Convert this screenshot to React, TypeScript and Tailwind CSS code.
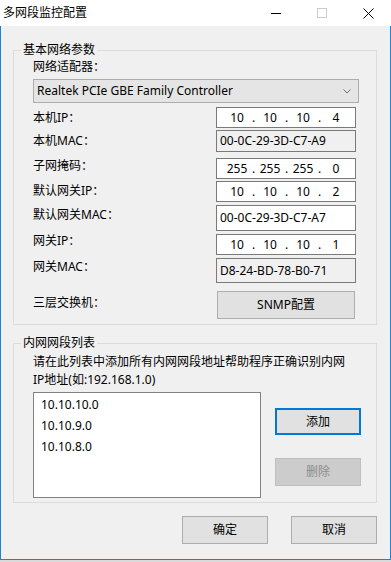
import React from "react";

const FONT = { fontFamily: '"Noto Sans", "Noto Sans CJK SC", sans-serif' };

function IpBox({ parts }: { parts: string[] }) {
  return (
    <div className="flex h-full items-center pl-[6px]">
      {parts.map((p, i) => (
        <React.Fragment key={i}>
          <span className="w-[28px] text-center">{p}</span>
          {i < 3 && <span className="w-[5px] text-center">.</span>}
        </React.Fragment>
      ))}
    </div>
  );
}

export default function App() {
  return (
    <div className="w-[391px] h-[562px] bg-[#dadada] text-[12px] text-black" style={FONT}>
      {/* title bar */}
      <div className="h-[26px] bg-white flex items-center">
        <div className="pl-[3px] flex-1 leading-[16px]">多网段监控配置</div>
        <div className="w-[46px] h-full flex items-center justify-center">
          <svg width="10" height="10" viewBox="0 0 10 10">
            <line x1="0" y1="5.5" x2="10" y2="5.5" stroke="#000" strokeWidth="1" />
          </svg>
        </div>
        <div className="w-[46px] h-full flex items-center justify-center">
          <svg width="10" height="10" viewBox="0 0 10 10">
            <rect x="0.5" y="0.5" width="9" height="9" fill="none" stroke="#cccccc" strokeWidth="1" />
          </svg>
        </div>
        <div className="w-[46px] h-full flex items-center justify-center">
          <svg width="11" height="11" viewBox="0 0 11 11">
            <line x1="0.5" y1="0.5" x2="10.5" y2="10.5" stroke="#000" strokeWidth="1" />
            <line x1="10.5" y1="0.5" x2="0.5" y2="10.5" stroke="#000" strokeWidth="1" />
          </svg>
        </div>
      </div>

      {/* body */}
      <div className="h-[534px] bg-[#f0f0f0] border-l border-r border-b border-[#1883d7] flex flex-col">
        {/* group 1 */}
        <fieldset className="mt-[16px] ml-[12px] w-[364px] border border-[#dcdcdc]">
          <legend className="ml-[7px] px-[2px] h-[16px] leading-[16px]">基本网络参数</legend>
          <div className="pl-[19px] pt-[1px] pb-[5px] flex flex-col">
            <div className="h-[16px] leading-[16px]">网络适配器：</div>
            <div className="mt-[4px] w-[326px] h-[24px] bg-[#e5e5e5] border border-[#adadad] flex items-center pl-[3px] pr-[7px]">
              <span className="flex-1">Realtek PCIe GBE Family Controller</span>
              <svg width="8" height="5" viewBox="0 0 8 5">
                <polyline points="0.5,0.5 4,4 7.5,0.5" fill="none" stroke="#707070" strokeWidth="1" />
              </svg>
            </div>

            <div className="mt-[4px] h-[21px] flex items-center">
              <span className="w-[183px] leading-[12px]">本机IP：</span>
              <div className="w-[140px] h-[21px] bg-white border border-[#7a7a7a]">
                <IpBox parts={["10", "10", "10", "4"]} />
              </div>
            </div>
            <div className="mt-[2px] h-[22px] flex items-center">
              <span className="w-[183px] leading-[12px]">本机MAC：</span>
              <div className="w-[140px] h-[22px] bg-[#f0f0f0] border border-[#7a7a7a] flex items-center pl-[3px]">
                00-0C-29-3D-C7-A9
              </div>
            </div>
            <div className="mt-[6px] h-[21px] flex items-center">
              <span className="w-[183px] leading-[12px] mb-[6px]">子网掩码：</span>
              <div className="w-[140px] h-[21px] bg-white border border-[#7a7a7a]">
                <IpBox parts={["255", "255", "255", "0"]} />
              </div>
            </div>
            <div className="mt-[2px] h-[21px] flex items-center">
              <span className="w-[183px] leading-[12px] mb-[2px]">默认网关IP：</span>
              <div className="w-[140px] h-[21px] bg-white border border-[#7a7a7a]">
                <IpBox parts={["10", "10", "10", "2"]} />
              </div>
            </div>
            <div className="mt-[3px] h-[26px] flex items-center">
              <span className="w-[183px] leading-[12px] mb-[6px]">默认网关MAC：</span>
              <div className="w-[140px] h-[26px] bg-white border border-[#7a7a7a] flex items-center pl-[3px]">
                00-0C-29-3D-C7-A7
              </div>
            </div>
            <div className="mt-[3px] h-[21px] flex items-center">
              <span className="w-[183px] leading-[12px] mb-[8px]">网关IP：</span>
              <div className="w-[140px] h-[21px] bg-white border border-[#7a7a7a]">
                <IpBox parts={["10", "10", "10", "1"]} />
              </div>
            </div>
            <div className="mt-[3px] h-[25px] flex items-center">
              <span className="w-[183px] leading-[12px] mb-[8px]">网关MAC：</span>
              <div className="w-[140px] h-[25px] bg-[#f0f0f0] border border-[#7a7a7a] flex items-center pl-[3px]">
                D8-24-BD-78-B0-71
              </div>
            </div>
            <div className="mt-[8px] h-[28px] flex items-center">
              <span className="w-[183px] leading-[12px] mb-[4px]">三层交换机：</span>
              <div className="ml-[1px] w-[138px] h-[28px] bg-[#e1e1e1] border border-[#adadad] flex items-center justify-center">
                SNMP配置
              </div>
            </div>
          </div>
        </fieldset>

        {/* group 2 */}
        <fieldset className="mt-[10px] ml-[12px] w-[364px] border border-[#dcdcdc]">
          <legend className="ml-[7px] px-[2px] h-[16px] leading-[16px]">内网网段列表</legend>
          <div className="pl-[19px] pt-[2px] pb-[4px] flex flex-col">
            <div className="leading-[18px]">
              <div>请在此列表中添加所有内网网段地址帮助程序正确识别内网</div>
              <div>IP地址(如:192.168.1.0)</div>
            </div>
            <div className="mt-[3px] flex items-start">
              <div className="w-[228px] h-[106px] bg-white border border-[#828282] pt-[1px] pl-[7px] flex flex-col">
                <div className="leading-[21px]">10.10.10.0</div>
                <div className="leading-[21px]">10.10.9.0</div>
                <div className="leading-[21px]">10.10.8.0</div>
              </div>
              <div className="ml-[14px] flex flex-col">
                <div className="mt-[16px] w-[86px] h-[27px] bg-[#e1e1e1] border-2 border-[#0078d7] flex items-center justify-center">
                  添加
                </div>
                <div className="mt-[23px] w-[86px] h-[28px] bg-[#cccccc] border border-[#bfbfbf] text-[#8d8d8d] flex items-center justify-center">
                  删除
                </div>
              </div>
            </div>
          </div>
        </fieldset>

        {/* bottom buttons */}
        <div className="mt-[13px] ml-[181px] flex gap-[23px]">
          <div className="w-[86px] h-[28px] bg-[#e1e1e1] border border-[#adadad] flex items-center justify-center">
            确定
          </div>
          <div className="w-[86px] h-[28px] bg-[#e1e1e1] border border-[#adadad] flex items-center justify-center">
            取消
          </div>
        </div>
      </div>
    </div>
  );
}
